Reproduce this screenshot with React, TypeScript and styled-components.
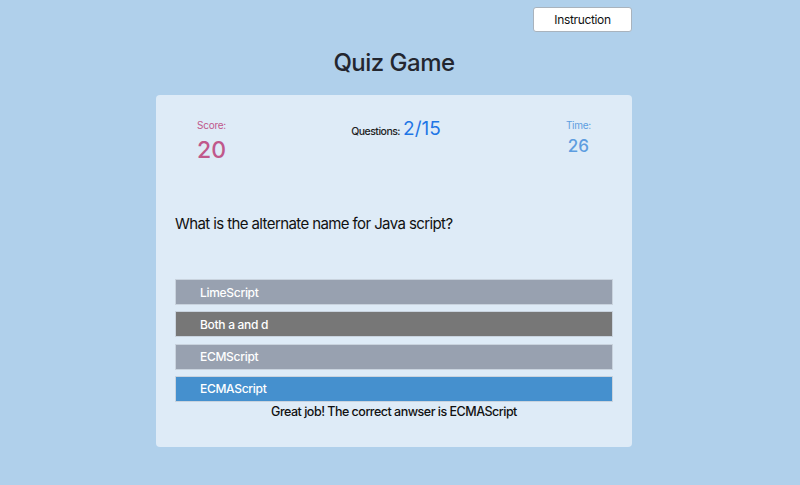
import React from 'react';
import styled, { createGlobalStyle } from 'styled-components';

const GlobalStyle = createGlobalStyle`
  body {
    margin: 0;
    background-color: #b0d0eb;
    font-family: Inter, 'Noto Sans', sans-serif;
  }
`;

type OptionKind = 'idle' | 'wrong' | 'correct';

const options: { label: string; kind: OptionKind }[] = [
  { label: 'LimeScript', kind: 'idle' },
  { label: 'Both a and d', kind: 'wrong' },
  { label: 'ECMScript', kind: 'idle' },
  { label: 'ECMAScript', kind: 'correct' },
];

const optionColors: Record<OptionKind, string> = {
  idle: '#98a1b0',
  wrong: '#777777',
  correct: '#4590ce',
};

const App = () => {
  return (
    <>
      <GlobalStyle />
      <Page>
        <TopBar>
          <InstructionButton>Instruction</InstructionButton>
        </TopBar>
        <Title>Quiz Game</Title>
        <Card>
          <StatsRow>
            <Stat>
              <StatLabel color="#c0588b">Score:</StatLabel>
              <StatValue color="#c0588b" size={23} offset={6}>20</StatValue>
            </Stat>
            <QuestionCount>
              <CountLabel>Questions:</CountLabel>
              <CountValue>2/15</CountValue>
            </QuestionCount>
            <Stat>
              <StatLabel color="#5d9de0">Time:</StatLabel>
              <StatValue color="#5d9de0" size={17} offset={2}>26</StatValue>
            </Stat>
          </StatsRow>
          <Question>What is the alternate name for Java script?</Question>
          <Options>
            {options.map((o) => (
              <OptionButton key={o.label} kind={o.kind}>
                {o.label}
              </OptionButton>
            ))}
          </Options>
          <Feedback>Great job! The correct anwser is ECMAScript</Feedback>
        </Card>
      </Page>
    </>
  );
};

const Page = styled.div`
  width: 476px;
  margin-left: 156px;
  display: flex;
  flex-direction: column;
`;

const TopBar = styled.div`
  display: flex;
  justify-content: flex-end;
  padding-top: 7px;
`;

const InstructionButton = styled.button`
  width: 99px;
  height: 25px;
  background: #ffffff;
  border: 1px solid #a9b3bd;
  border-radius: 3px;
  font-family: Inter, 'Noto Sans', sans-serif;
  font-size: 12px;
  letter-spacing: -0.35px;
  color: #111;
  padding: 0;
`;

const Title = styled.h1`
  margin: 16px 0 0;
  height: 47px;
  text-align: center;
  font-size: 24px;
  font-weight: 500;
  color: #23262f;
  letter-spacing: -0.5px;
`;

const Card = styled.div`
  height: 352px;
  box-sizing: border-box;
  background-color: #deebf7;
  border-radius: 4px;
  padding: 24px 19px 0;
  display: flex;
  flex-direction: column;
`;

const StatsRow = styled.div`
  display: flex;
  justify-content: space-between;
  align-items: flex-start;
  padding: 0 22px;
  height: 80px;
`;

const Stat = styled.div`
  display: flex;
  flex-direction: column;
  align-items: center;
`;

const StatLabel = styled.span<{ color: string }>`
  font-size: 10px;
  line-height: 12px;
  letter-spacing: -0.25px;
  color: ${(p) => p.color};
`;

const StatValue = styled.span<{ color: string; size: number; offset: number }>`
  margin-top: ${(p) => p.offset}px;
  font-size: ${(p) => p.size}px;
  line-height: 26px;
  font-weight: 500;
  color: ${(p) => p.color};
`;

const QuestionCount = styled.div`
  display: flex;
  align-items: baseline;
  gap: 3px;
  margin-top: -2px;
`;

const CountLabel = styled.span`
  font-size: 10.5px;
  font-weight: 500;
  letter-spacing: -0.5px;
  color: #222;
`;

const CountValue = styled.span`
  font-size: 19px;
  color: #1f76e6;
`;

const Question = styled.div`
  height: 80px;
  padding-top: 15px;
  box-sizing: border-box;
  font-size: 15px;
  line-height: 20px;
  letter-spacing: -0.6px;
  color: #111;
`;

const Options = styled.div`
  display: flex;
  flex-direction: column;
  gap: 6.3px;
`;

const OptionButton = styled.div<{ kind: OptionKind }>`
  height: 26px;
  box-sizing: border-box;
  border: 1px solid #c9d3de;
  background-color: ${(p) => optionColors[p.kind]};
  color: #fff;
  font-size: 12px;
  font-weight: 500;
  letter-spacing: -0.3px;
  display: flex;
  align-items: center;
  padding-left: 24px;
`;

const Feedback = styled.div`
  text-align: center;
  font-size: 12.5px;
  font-weight: 500;
  line-height: 20px;
  letter-spacing: -0.5px;
  color: #111;
`;

export default App;
